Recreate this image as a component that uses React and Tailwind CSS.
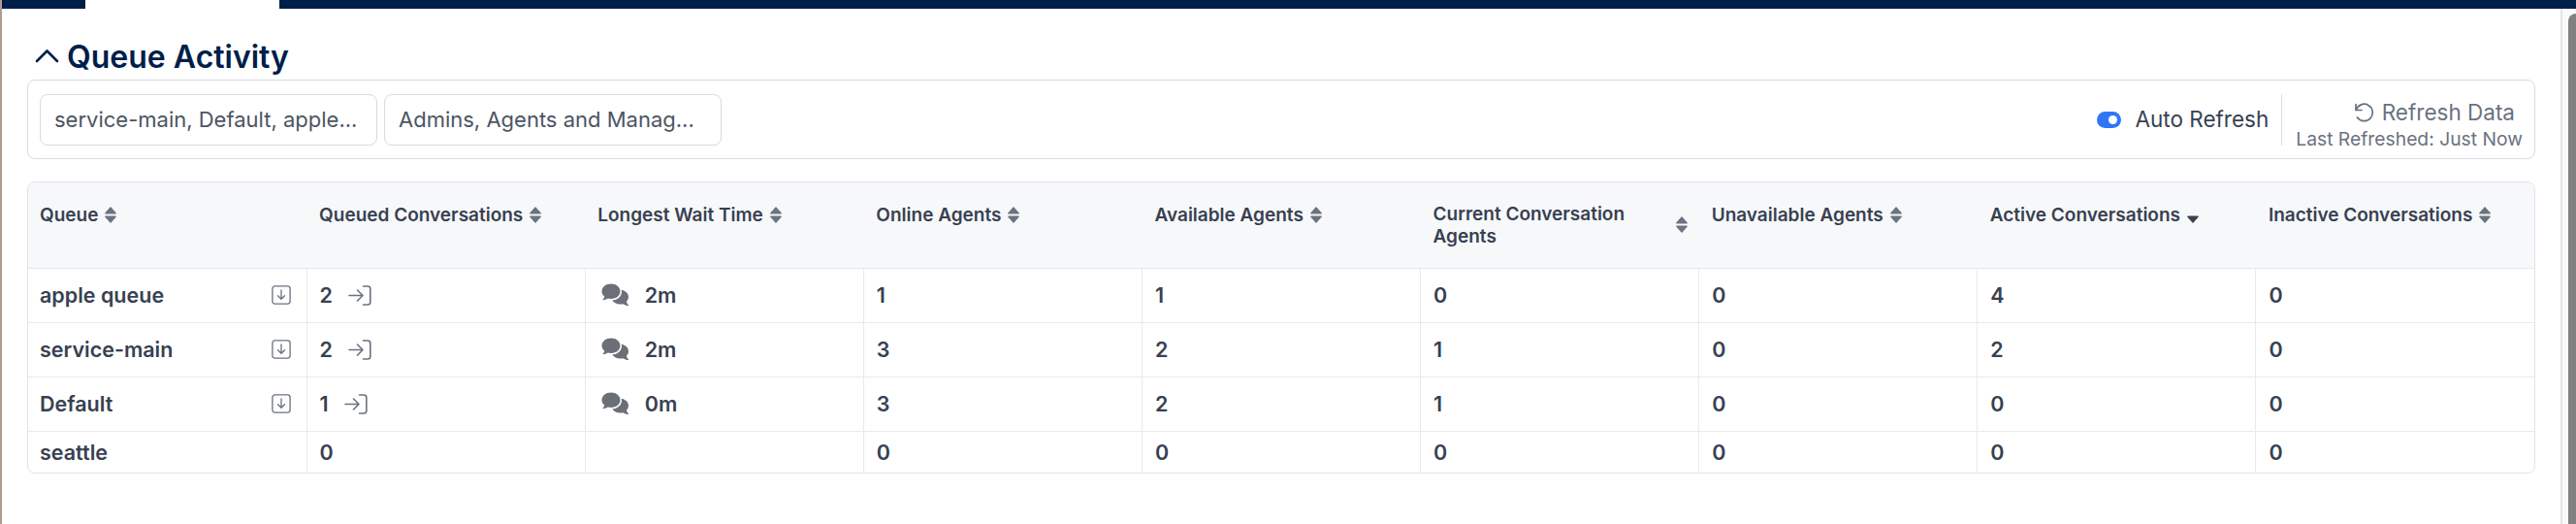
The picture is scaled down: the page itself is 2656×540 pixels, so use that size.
import React from 'react';

const SortIcon = ({ active }) => (
  <svg width="12" height="17" viewBox="0 0 12 17" className="shrink-0">
    {!active && <path d="M6 0 L11.6 6.3 Q12.2 7.5 11 7.5 L1 7.5 Q-0.2 7.5 0.4 6.3 Z" fill="#6b7280" />}
    <path d="M1 9.5 L11 9.5 Q12.2 9.5 11.6 10.7 L6 17 L0.4 10.7 Q-0.2 9.5 1 9.5 Z" fill={active ? '#374151' : '#6b7280'} />
  </svg>
);

const DownloadBox = () => (
  <svg width="20" height="20" viewBox="0 0 20 20" fill="none" stroke="#6b7280" strokeWidth="1.3" strokeLinecap="round" strokeLinejoin="round" className="shrink-0">
    <rect x="0.9" y="0.9" width="18.2" height="18.2" rx="2.5" />
    <path d="M10 5 V14 M6.5 10.8 L10 14.3 L13.5 10.8" />
  </svg>
);

const EnterIcon = () => (
  <svg width="24" height="21" viewBox="0 0 24 21" fill="none" stroke="#6b7280" strokeWidth="1.6" strokeLinecap="round" strokeLinejoin="round" className="shrink-0">
    <path d="M1 10.5 H14.5 M9.5 5 L15 10.5 L9.5 16" />
    <path d="M15.5 1 H20 Q22.8 1 22.8 3.5 V17.5 Q22.8 20 20 20 H15.5" />
  </svg>
);

const ChatIcon = () => (
  <svg width="29" height="24" viewBox="0 0 29 24" className="shrink-0">
    <path d="M10 0.5 C15.5 0.5 19.5 4 19.5 8.3 C19.5 12.7 15.5 16 10 16 C8.8 16 7.7 15.8 6.7 15.5 C5.2 16.6 3.3 17.2 1.2 17.2 C2.3 16 3.1 14.8 3.3 13.6 C1.5 12.2 0.5 10.3 0.5 8.3 C0.5 4 4.5 0.5 10 0.5 Z" fill="#6b6f78" />
    <path d="M20.5 6.8 C25 7.5 28 10.5 28 14 C28 15.8 27.3 17.4 26 18.6 C26.2 20.2 27 21.5 28.4 23 C26 23 24 22.3 22.5 21.2 C21.6 21.5 20.5 21.6 19.5 21.6 C15.5 21.6 12.5 19.8 11.3 17.3 C16.8 17.3 21 13.6 21 8.5 C21 7.9 20.8 7.3 20.5 6.8 Z" fill="#6b6f78" />
  </svg>
);

const RefreshIcon = () => (
  <svg width="21" height="21" viewBox="0 0 21 21" fill="none" stroke="#6b7280" strokeWidth="1.7" strokeLinecap="round" strokeLinejoin="round" className="shrink-0">
    <path d="M2 1.5 V7.5 H8" />
    <path d="M2.3 7.3 A8.7 8.7 0 1 1 3.5 15" />
  </svg>
);

const columns = [
  { label: 'Queue' },
  { label: 'Queued Conversations' },
  { label: 'Longest Wait Time' },
  { label: 'Online Agents' },
  { label: 'Available Agents' },
  { label: 'Current Conversation Agents', wrap: true },
  { label: 'Unavailable Agents' },
  { label: 'Active Conversations', active: true },
  { label: 'Inactive Conversations' },
];

const rows = [
  { name: 'apple queue', queued: 2, wait: '2m', cells: [1, 1, 0, 0, 4, 0] },
  { name: 'service-main', queued: 2, wait: '2m', cells: [3, 2, 1, 0, 2, 0] },
  { name: 'Default', queued: 1, wait: '0m', cells: [3, 2, 1, 0, 0, 0] },
  { name: 'seattle', queued: 0, cells: [0, 0, 0, 0, 0, 0] },
];

const App = () => (
  <div className="flex h-[540px] w-[2656px] overflow-hidden bg-white font-['Inter',sans-serif] text-[#374151]">
    <div className="w-[2px] shrink-0 bg-[#b29c92]" />
    <div className="flex min-w-0 flex-1 flex-col">
      <div className="flex h-[9px] shrink-0">
        <div className="w-[86px] bg-[#001e4a]" />
        <div className="w-[200px] bg-white" />
        <div className="flex-1 bg-[#001e4a]" />
      </div>
      <div className="flex min-h-0 flex-1">
        <main className="min-w-0 flex-1 pl-[26px] pr-[26px]">
          <div className="flex h-[73px] items-end pb-[3px]">
            <svg width="26" height="15" viewBox="0 0 26 15" fill="none" stroke="#001e4a" strokeWidth="2.6" strokeLinecap="round" strokeLinejoin="round" className="mb-[14px] ml-[8px]">
              <path d="M2 13 L12.5 2.5 L23 13" />
            </svg>
            <h2 className="ml-[7px] text-[32px] leading-[40px] font-semibold text-[#001e4a]">Queue Activity</h2>
          </div>
          <div className="flex h-[82px] items-center justify-between rounded-lg border border-[#d9dae3] pl-[12px] pr-[12px]">
            <div className="flex gap-[7px]">
              <div className="flex h-[53px] w-[348px] items-center rounded-lg border border-[#d9dae3] px-[14px] text-[22px] text-[#4b5563]">service-main, Default, apple...</div>
              <div className="flex h-[53px] w-[348px] items-center rounded-lg border border-[#d9dae3] px-[14px] text-[22px] text-[#4b5563]">Admins, Agents and Manag...</div>
            </div>
            <div className="flex h-[53px] items-center">
              <div className="flex items-center gap-[14px] pr-[13px]">
                <div className="flex h-[17px] w-[25px] items-center justify-end rounded-full bg-[#2f76f6] pr-[4px]">
                  <div className="h-[9px] w-[9px] rounded-full bg-white" />
                </div>
                <span className="text-[22.5px] text-[#374151]">Auto Refresh</span>
              </div>
              <div className="flex h-full flex-col items-end border-l border-[#d9dae3] pl-[14px] pt-[3px]">
                <div className="flex h-[33px] items-center gap-[8px] pr-[8px] text-[22.5px] text-[#6b7280]">
                  <RefreshIcon />
                  <span>Refresh Data</span>
                </div>
                <div className="text-[19.3px] leading-[20px] text-[#6b7280]">Last Refreshed: Just Now</div>
              </div>
            </div>
          </div>
          <div className="mt-[23px] overflow-hidden rounded-lg border border-[#e2e3ea]">
            <table className="w-full table-fixed border-collapse">
              <thead>
                <tr className="h-[88px] border-b border-[#e5e7eb] bg-[#f7f8fa]">
                  {columns.map((col, i) => (
                    <th key={col.label} className={`${i === 0 ? 'pl-[12px]' : 'pl-[13px]'} pr-[12px] text-left text-[19px] leading-[23px] font-semibold text-[#374151] ${col.wrap ? 'align-middle' : 'align-top pt-[22px]'}`}>
                      {col.wrap ? (
                        <div className="flex items-center justify-between">
                          <span className="w-[240px]">{col.label}</span>
                          <SortIcon />
                        </div>
                      ) : (
                        <div className="flex items-center gap-[7px] whitespace-nowrap">
                          <span>{col.label}</span>
                          <SortIcon active={col.active} />
                        </div>
                      )}
                    </th>
                  ))}
                </tr>
              </thead>
              <tbody>
                {rows.map((row, i) => (
                  <tr key={row.name} className={`${i < 3 ? 'h-[56px] border-b' : 'h-[43px]'} border-[#e8e9ee] text-[21.5px] font-semibold text-[#374151]`}>
                    <td className="border-r border-[#e8e9ee] pl-[12px] pr-[16px]">
                      <div className="flex items-center justify-between">
                        <span>{row.name}</span>
                        {row.wait && <DownloadBox />}
                      </div>
                    </td>
                    <td className="border-r border-[#e8e9ee] pl-[13px]">
                      <div className="flex items-center gap-[16px]">
                        <span>{row.queued}</span>
                        {row.wait && <EnterIcon />}
                      </div>
                    </td>
                    <td className="border-r border-[#e8e9ee] pl-[16px]">
                      {row.wait && (
                        <div className="flex items-center gap-[16px]">
                          <ChatIcon />
                          <span>{row.wait}</span>
                        </div>
                      )}
                    </td>
                    {row.cells.map((value, j) => (
                      <td key={j} className={`${j < 5 ? 'border-r' : ''} border-[#e8e9ee] pl-[13px]`}>{value}</td>
                    ))}
                  </tr>
                ))}
              </tbody>
            </table>
          </div>
        </main>
        <div className="flex w-[16px] shrink-0 justify-end border-l-2 border-[#e4e4e4] bg-[#fafafa]">
          <div className="mt-[5px] w-[8px] rounded-tl-[8px] bg-[#808080]" />
        </div>
      </div>
    </div>
  </div>
);

export default App;
